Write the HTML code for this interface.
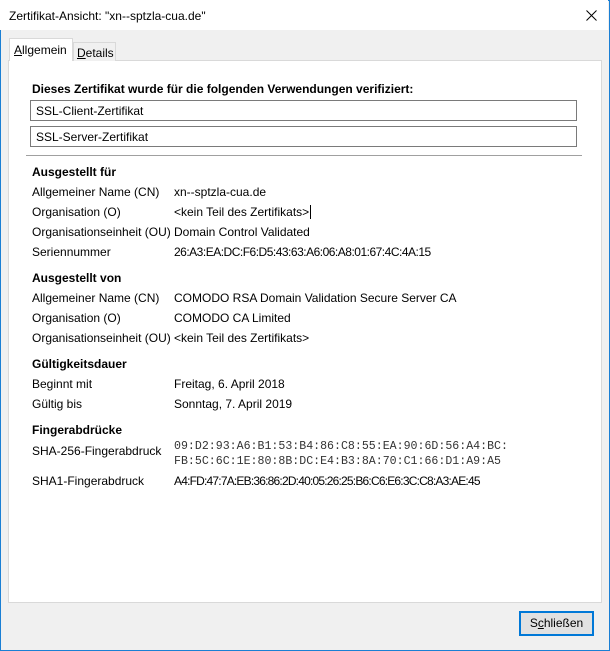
<!DOCTYPE html>
<html><head><meta charset="utf-8"><style>
*{margin:0;padding:0;box-sizing:border-box}
body{width:610px;height:651px;overflow:hidden;background:#f0f0f0;font-family:"Liberation Sans",sans-serif;font-size:12px;color:#000;position:relative}
.win{position:absolute;left:0;top:0;width:610px;height:651px;border:1px solid #1a7fd4;}
.title{position:absolute;left:0;top:0;width:608px;height:30px;background:#fff}
.t{position:absolute;white-space:nowrap;line-height:14px;margin-top:1px}
.b{font-weight:bold}
.panel{position:absolute;left:8px;top:60px;width:594px;height:543px;background:#fff;border:1px solid #d9d9d9}
.box{position:absolute;left:30px;width:547px;height:21px;border:1px solid #7a7a7a;background:#fff;padding-left:5px;line-height:20px}
.mono{font-family:"Liberation Mono",monospace;font-size:11.6px;color:#333}
.n{letter-spacing:-0.5px}
</style></head><body>
<div class="win"></div>
<div class="title"></div>
<div class="t" style="left:9px;top:8px;font-size:12px">Zertifikat-Ansicht: "xn--sptzla-cua.de"</div>
<svg style="position:absolute;left:586px;top:10px" width="11" height="11"><path d="M0.5 0.5L10.5 10.5M10.5 0.5L0.5 10.5" stroke="#000" stroke-width="1"/></svg>
<div class="panel"></div>
<div style="position:absolute;left:73px;top:42px;width:43px;height:19px;background:#f0f0f0;border:1px solid #d9d9d9;border-bottom:none"></div>
<div class="t" style="left:77px;top:45px"><u>D</u>etails</div>
<div style="position:absolute;left:9px;top:38px;width:64px;height:23px;background:#fff;border:1px solid #d9d9d9;border-bottom:none"></div>
<div class="t" style="left:14px;top:42px"><u>A</u>llgemein</div>
<div class="t b" style="left:32px;top:81px">Dieses Zertifikat wurde für die folgenden Verwendungen verifiziert:</div>
<div class="box" style="top:100px">SSL-Client-Zertifikat</div>
<div class="box" style="top:126px">SSL-Server-Zertifikat</div>
<div style="position:absolute;left:26px;top:155px;width:556px;height:1px;background:#a0a0a0"></div>
<div class="t b" style="left:32px;top:164px">Ausgestellt für</div>
<div class="t" style="left:32px;top:184px">Allgemeiner Name (CN)</div><div class="t" style="left:174px;top:184px">xn--sptzla-cua.de</div>
<div class="t" style="left:32px;top:204px">Organisation (O)</div><div class="t" style="left:174px;top:204px">&lt;kein Teil des Zertifikats&gt;<span style="display:inline-block;width:1px;height:14px;background:#000;vertical-align:top;margin-left:1px"></span></div>
<div class="t" style="left:32px;top:224px">Organisationseinheit (OU)</div><div class="t" style="left:174px;top:224px">Domain Control Validated</div>
<div class="t" style="left:32px;top:244px">Seriennummer</div><div class="t n" style="left:174px;top:244px">26:A3:EA:DC:F6:D5:43:63:A6:06:A8:01:67:4C:4A:15</div>
<div class="t b" style="left:32px;top:270px">Ausgestellt von</div>
<div class="t" style="left:32px;top:290px">Allgemeiner Name (CN)</div><div class="t" style="left:174px;top:290px">COMODO RSA Domain Validation Secure Server CA</div>
<div class="t" style="left:32px;top:310px">Organisation (O)</div><div class="t" style="left:174px;top:310px">COMODO CA Limited</div>
<div class="t" style="left:32px;top:330px">Organisationseinheit (OU)</div><div class="t" style="left:174px;top:330px">&lt;kein Teil des Zertifikats&gt;</div>
<div class="t b" style="left:32px;top:356px">Gültigkeitsdauer</div>
<div class="t" style="left:32px;top:376px">Beginnt mit</div><div class="t" style="left:174px;top:376px">Freitag, 6. April 2018</div>
<div class="t" style="left:32px;top:396px">Gültig bis</div><div class="t" style="left:174px;top:396px">Sonntag, 7. April 2019</div>
<div class="t b" style="left:32px;top:422px">Fingerabdrücke</div>
<div class="t" style="left:32px;top:443px">SHA-256-Fingerabdruck</div>
<div class="t mono" style="left:174px;top:438px;line-height:15px">09:D2:93:A6:B1:53:B4:86:C8:55:EA:90:6D:56:A4:BC:<br>FB:5C:6C:1E:80:8B:DC:E4:B3:8A:70:C1:66:D1:A9:A5</div>
<div class="t" style="left:32px;top:473px">SHA1-Fingerabdruck</div><div class="t" style="left:174px;top:473px;letter-spacing:-0.8px">A4:FD:47:7A:EB:36:86:2D:40:05:26:25:B6:C6:E6:3C:C8:A3:AE:45</div>
<div style="position:absolute;left:519px;top:611px;width:75px;height:25px;border:2px solid #0078d7;background:#e1e1e1;text-align:center;line-height:21px">S<u>c</u>hließen</div>
</body></html>
